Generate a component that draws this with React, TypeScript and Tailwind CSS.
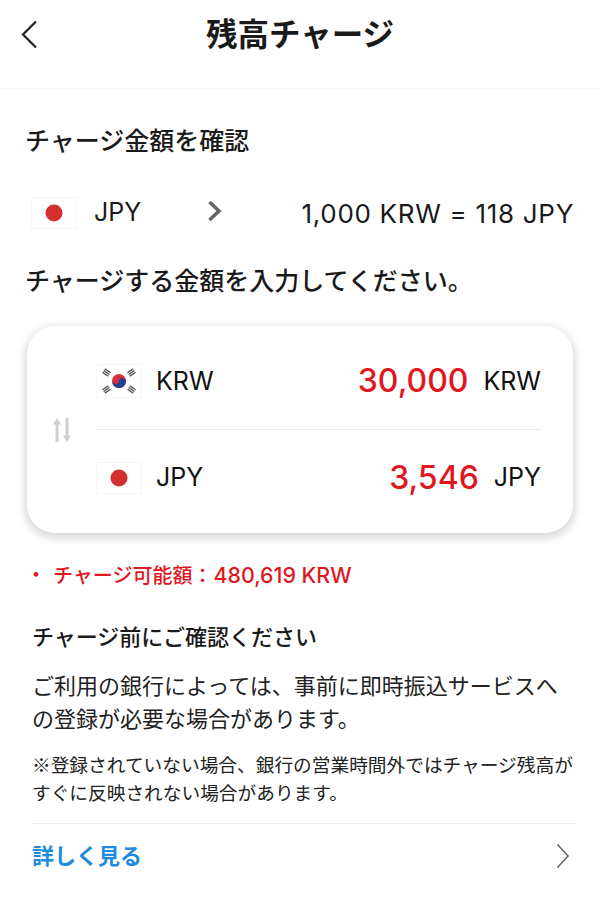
const FONT = "font-['Inter','Noto_Sans_CJK_JP',sans-serif]";

function JapanFlag({ className }: { className: string }) {
  return (
    <svg viewBox="0 0 46 32" className={className}>
      <rect x="0.5" y="0.5" width="45" height="31" fill="#fff" stroke="#f6f6f6" />
      <circle cx="23" cy="16" r="8.5" fill="#d32f2f" />
    </svg>
  );
}

function KoreaFlag({ className }: { className: string }) {
  const bars = [
    { r: -56, x: 10.5, y: 8.5 },
    { r: 56, x: 35.5, y: 8.5 },
    { r: 56, x: 10.5, y: 25.5 },
    { r: -56, x: 35.5, y: 25.5 },
  ];
  return (
    <svg viewBox="0 0 46 34" className={className}>
      <rect x="0.5" y="0.5" width="45" height="33" fill="#fff" stroke="#f6f6f6" />
      {bars.map((b, i) => (
        <g key={i} transform={`translate(${b.x} ${b.y}) rotate(${b.r + 90})`} fill="#555">
          <rect x="-3.5" y="-2.8" width="7" height="1.4" />
          <rect x="-3.5" y="-0.7" width="7" height="1.4" />
          <rect x="-3.5" y="1.4" width="7" height="1.4" />
        </g>
      ))}
      <circle cx="23" cy="17" r="7" fill="#d32f3f" />
      <path d="M16.1 15.8a3.500 3.500 0 0 0 6.900 1.200 3.500 3.500 0 0 1 6.900 1.200A7 7 0 0 1 16.100 15.800z" fill="#1f3f93" />
    </svg>
  );
}

function Row({ flag, code, amount }: { flag: React.ReactNode; code: string; amount: string }) {
  return (
    <div className="flex h-[95px] items-center">
      {flag}
      <span className="ml-[14px] text-[25px] text-[#111]">{code}</span>
      <span className="ml-auto text-[32px] font-medium text-[#e2161f]">{amount}</span>
      <span className="ml-[15px] text-[25px] text-[#111]">{code}</span>
    </div>
  );
}

export default function App() {
  return (
    <div className={`${FONT} h-[907px] w-[600px] overflow-hidden bg-white`}>
      {/* Header */}
      <header className="relative flex h-[89px] items-center justify-center border-b border-[#f7f7f7] pb-[18px]">
        <svg className="absolute left-[20px] top-[20px] h-[28px] w-[20px]" viewBox="0 0 20 28" fill="none" stroke="#222" strokeWidth="2.2">
          <path d="M16 1.500 3 14.500l13 13" />
        </svg>
        <h1 className="text-[31.500px] font-semibold leading-none text-[#1a1a1a]">残高チャージ</h1>
      </header>

      <main>
        <h2 className="mt-[34px] pl-[25px] text-[25px] font-medium leading-[36px] text-[#1a1a1a]">チャージ金額を確認</h2>

        {/* Rate */}
        <div className="mt-[34px] flex h-[40px] items-center pl-[31px] pr-[26px]">
          <JapanFlag className="h-[32px] w-[46px]" />
          <span className="ml-[17px] text-[25px] text-[#1a1a1a]">JPY</span>
          <svg className="ml-[66px] mb-[4px] h-[24px] w-[16px]" viewBox="0 0 16 24" fill="none" stroke="#666" strokeWidth="3.6">
            <path d="M2.500 3 12 12l-9.500 9" />
          </svg>
          <span className="ml-auto text-[26px] tracking-[0.7px] text-[#1a1a1a]">1,000 KRW = 118 JPY</span>
        </div>

        <p className="mt-[30px] pl-[25px] text-[25px] font-medium leading-[36px] text-[#1a1a1a]">チャージする金額を入力してください。</p>

        {/* Amount card */}
        <section className="mx-[27px] mt-[27px] flex h-[207px] items-center rounded-[28px] bg-white pl-[25px] pr-[32px] shadow-[0_3px_8px_2px_rgba(0,0,0,0.16)]">
          <svg className="mr-[24px] h-[24px] w-[20px] shrink-0" viewBox="0 0 20 24" fill="#cfcfcf">
            <path d="M5 0 9 6.500H6.500V24h-3V6.500H1zM15 24l-4-6.500h2.500V0h3v17.500H19z" />
          </svg>
          <div className="flex-1">
            <Row flag={<KoreaFlag className="h-[34px] w-[46px]" />} code="KRW" amount="30,000" />
            <div className="h-[1.500px] bg-[#e8e8e8]" />
            <Row flag={<JapanFlag className="h-[34px] w-[46px]" />} code="JPY" amount="3,546" />
          </div>
        </section>

        <p className="mt-[27px] flex pl-[26px] text-[20px] font-medium leading-[30px] text-[#e2161f]">
          <span className="w-[27px]">・</span>
          <span>
            チャージ可能額：<span className="ml-[1px] text-[21.400px]">480,619 KRW</span>
          </span>
        </p>

        {/* Notice */}
        <div className="mt-[30px] pl-[32px] pr-[24px]">
          <h3 className="text-[22px] font-medium leading-[32px] text-[#1a1a1a]">チャージ前にご確認ください</h3>
          <p className="mt-[17px] text-[22px] leading-[33px] text-[#222]">
            ご利用の銀行によっては、事前に即時振込サービスへの登録が必要な場合があります。
          </p>
          <p className="mt-[14px] font-['Noto_Sans_CJK_JP',sans-serif] text-[18.700px] leading-[28px] text-[#222]">
            ※登録されていない場合、銀行の営業時間外ではチャージ残高がすぐに反映されない場合があります。
          </p>
        </div>

        <div className="ml-[32px] mr-[24px] mt-[17px] flex h-[65px] items-center justify-between border-t border-[#eee] pr-[6px]">
          <span className="text-[22px] font-semibold text-[#1e8be0]">詳しく見る</span>
          <svg className="h-[26px] w-[14px]" viewBox="0 0 14 26" fill="none" stroke="#666" strokeWidth="1.6">
            <path d="M1.500 1.500 12 13 1.500 24.500" />
          </svg>
        </div>
      </main>
    </div>
  );
}
